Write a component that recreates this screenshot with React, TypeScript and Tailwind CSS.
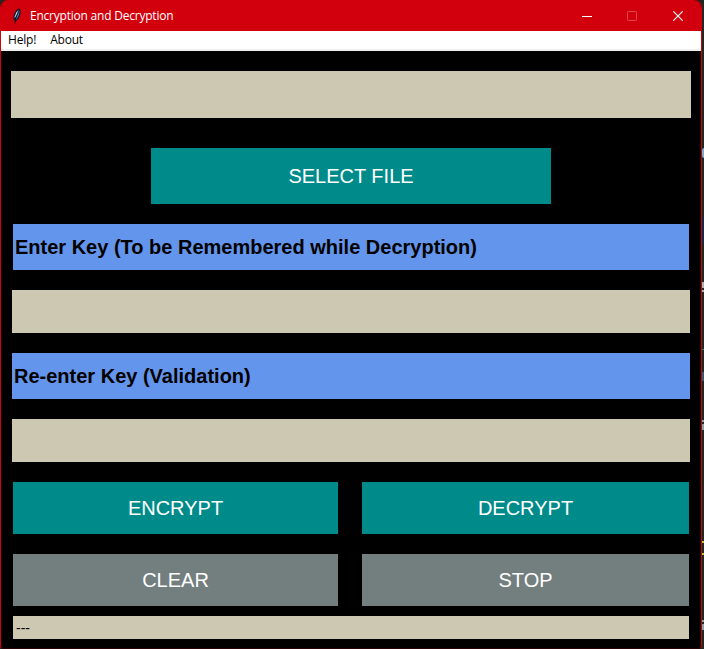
import type { ReactNode } from "react";

function Feather() {
  return (
    <svg width="16" height="16" viewBox="0 0 16 16" className="block" aria-hidden="true">
      <path d="M10.8.5 12.6 1.6 12.4 6 10.8 10.2 8.2 13 6.6 12.8 5.3 10.2 6 6.2 8 2.5Z" fill="#101828" />
      <path d="M10.7 2 8.3 4.6 6.8 8.2 6.6 10.6 8.6 7Z" fill="#c5dcf2" />
      <path d="M11.6 2.3 11 6.5 9.4 10 7.8 11.6 8.8 7.6Z" fill="#4b87ca" />
      <path d="M10.4 4.2 7.5 10.8 6.8 15.5" fill="none" stroke="#111" strokeWidth=".9" />
    </svg>
  );
}

function Action({ children, className }: { children: ReactNode; className: string }) {
  return (
    <button className={`flex items-center justify-center whitespace-nowrap text-[20px] leading-6 text-white ${className}`}>
      {children}
    </button>
  );
}

function Background() {
  return (
    <div className="absolute inset-y-0 right-0 w-[14px] overflow-hidden bg-[#262620] text-[#a9b5bd]">
      <div className="absolute right-0 top-[148px] h-[10px] w-[2px] rounded-l bg-[#7fa9c5]" />
      <div className="absolute right-0 top-[217px] h-[27px] w-[2px] bg-[#1c2745]" />
      <div className="absolute right-0 top-[282px] h-[6px] w-[2px] bg-[#b0b0b0]" />
      <div className="absolute right-0 top-[290px] h-[2px] w-[2px] bg-[#b0b0b0]" />
      <div className="absolute right-0 top-[349px] h-px w-[2px] bg-[#3f8190]" />
      <div className="absolute right-0 top-[372px] h-[9px] w-[2px] bg-[#40536f]" />
      <div className="absolute right-0 top-[420px] h-[2px] w-[2px] bg-[#91a0a5]" />
      <div className="absolute right-0 top-[424px] h-[6px] w-[2px] bg-[#91a0a5]" />
      <div className="absolute right-0 top-[541px] h-[2px] w-[2px] bg-[#c1bd37]" />
      <div className="absolute right-0 top-[553px] h-[2px] w-[2px] bg-[#c1bd37]" />
      <div className="absolute right-0 top-[620px] h-[2px] w-[2px] bg-[#91a0a5]" />
      <div className="absolute right-0 top-[624px] h-[6px] w-[2px] bg-[#91a0a5]" />
    </div>
  );
}

export default function App() {
  return (
    <div className="relative h-[649px] w-[704px] overflow-hidden bg-[#262620] font-['Liberation_Sans',Arial,sans-serif]">
      <Background />
      <div className="relative flex h-[649px] w-[702px] flex-col overflow-hidden rounded-t-[8px] rounded-b-[4px] border-x border-b border-x-[#d2000c] border-b-[#250004] bg-black">
        <header className="flex h-[31px] shrink-0 items-center bg-[#d2000c] pl-[7px] font-['Open_Sans','Noto_Sans',sans-serif] text-white">
          <Feather />
          <span className="ml-[6px] whitespace-nowrap text-[12px] leading-4 tracking-[-0.22px]">Encryption and Decryption</span>
          <div className="ml-auto flex items-center">
            <svg width="10" height="10" viewBox="0 0 10 10" className="mr-[35px]"><path d="M0 5.5H10" stroke="white" /></svg>
            <svg width="10" height="10" viewBox="0 0 10 10" className="mr-[36px]"><rect x=".5" y=".5" width="9" height="9" rx=".8" fill="none" stroke="#df444d" /></svg>
            <svg width="10" height="10" viewBox="0 0 10 10" className="mr-[18px]"><path d="m.3.3 9.4 9.4M9.7.3.3 9.7" stroke="white" strokeWidth="1.1" /></svg>
          </div>
        </header>
        <nav className="flex h-5 shrink-0 items-center gap-[14px] border-b-2 border-[#f0f0f0] bg-white pl-[7px] font-['Open_Sans','Noto_Sans',sans-serif] text-[12px] leading-4 tracking-[-0.2px] text-black">
          <span>Help!</span>
          <span>About</span>
        </nav>
        <main className="flex flex-col pt-5">
          <div className="ml-[10px] h-[47px] w-[680px] bg-[#cdc8b1]" />
          <Action className="mt-[30px] ml-[150px] h-[56px] w-[400px] bg-[#008b8b]">SELECT FILE</Action>
          <div className="mt-5 ml-3 flex h-[46px] w-[676px] items-center whitespace-nowrap bg-[#6495ed] pl-[2px] text-[20px] font-bold leading-6 text-black">Enter Key (To be Remembered while Decryption)</div>
          <div className="mt-5 ml-[11px] h-[43px] w-[678px] bg-[#cdc8b1]" />
          <div className="mt-5 ml-[11px] flex h-[46px] w-[678px] items-center whitespace-nowrap bg-[#6495ed] pl-[2px] text-[20px] font-bold leading-6 text-black">Re-enter Key (Validation)</div>
          <div className="mt-5 ml-[11px] h-[43px] w-[678px] bg-[#cdc8b1]" />
          <div className="mt-5 ml-3 grid grid-cols-[325px_327px] gap-x-6 gap-y-5">
            <Action className="h-[52px] bg-[#008b8b]">ENCRYPT</Action>
            <Action className="h-[52px] bg-[#008b8b]">DECRYPT</Action>
            <Action className="h-[52px] bg-[#737e7e]">CLEAR</Action>
            <Action className="h-[52px] bg-[#737e7e]">STOP</Action>
          </div>
          <footer className="mt-[10px] ml-3 flex h-[23px] w-[676px] items-center bg-[#cdc8b1] pl-[3px] text-[14px] leading-4 text-black">---</footer>
        </main>
      </div>
    </div>
  );
}
